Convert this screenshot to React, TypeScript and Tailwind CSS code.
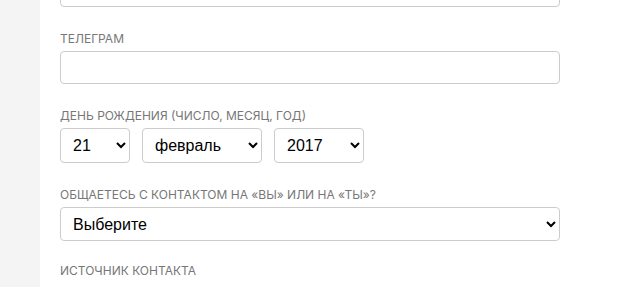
import React from "react";

const labelCls =
  "block uppercase text-[12px] leading-[16px] text-[#777777] mb-[4px]";
const labelFont = { fontFamily: "Inter, 'Noto Sans', sans-serif" } as const;
const selFont = { fontFamily: "'Liberation Sans', Arial, sans-serif" } as const;
const selectCls =
  "border border-[#cccccc] rounded-[4px] bg-white text-[16px] text-black pl-[8px] pr-[8px]";

export default function App() {
  return (
    <div className="flex w-[620px] h-[287px] overflow-hidden bg-white">
      <div className="w-[40px] shrink-0 bg-[#f4f4f4]" />
      <div className="flex flex-col pl-[20px] w-[520px]">
        <input
          className="-mt-[26px] h-[33px] w-[500px] border border-[#cccccc] rounded-[4px] bg-white"
          type="text"
        />
        <div className="mt-[24px]">
          <label className={labelCls} style={labelFont}>
            Телеграм
          </label>
          <input
            className="h-[33px] w-[500px] border border-[#cccccc] rounded-[4px] bg-white"
            type="text"
          />
        </div>
        <div className="mt-[24px]">
          <label className={labelCls} style={labelFont}>
            День рождения (число, месяц, год)
          </label>
          <div className="flex gap-[12px]">
            <select className={selectCls + " h-[35px] w-[70px]"} style={selFont} defaultValue="21">
              <option value="21">21</option>
            </select>
            <select className={selectCls + " h-[35px] w-[120px]"} style={selFont} defaultValue="feb">
              <option value="feb">февраль</option>
            </select>
            <select className={selectCls + " h-[35px] w-[90px]"} style={selFont} defaultValue="2017">
              <option value="2017">2017</option>
            </select>
          </div>
        </div>
        <div className="mt-[24px]">
          <label className={labelCls} style={labelFont}>
            Общаетесь с контактом на «вы» или на «ты»?
          </label>
          <select className={selectCls + " h-[34px] w-[500px]"} style={selFont} defaultValue="">
            <option value="">Выберите</option>
          </select>
        </div>
        <div className="mt-[22px]">
          <label className={labelCls} style={labelFont}>
            Источник контакта
          </label>
        </div>
      </div>
    </div>
  );
}
